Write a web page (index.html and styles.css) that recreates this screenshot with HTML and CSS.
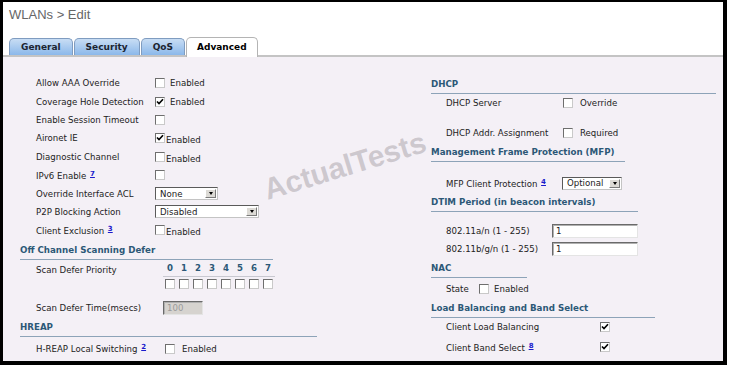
FILE: index.html
```html
<!DOCTYPE html>
<html lang="en">
<head>
  <meta charset="UTF-8" />
  <title>WLANs &gt; Edit</title>
  <link rel="stylesheet" href="styles.css">
</head>
<body>

<div class="frame">
  <div class="head">
    <div class="title">WLANs &gt; Edit</div>
    <ul class="tabs">
      <li class="tab">General</li>
      <li class="tab">Security</li>
      <li class="tab">QoS</li>
      <li class="tab on">Advanced</li>
    </ul>
  </div>

  <div class="panel">
    <!-- left column -->
    <div class="col col-left">
      <div class="grp grp-main">
        <div class="row"><span class="lbl">Allow AAA Override</span><span class="cb"></span><span class="opt">Enabled</span></div>
        <div class="row"><span class="lbl">Coverage Hole Detection</span><span class="cb"><svg width="8" height="8" viewBox="0 0 8 8"><path d="M1 3.5 3 5.6 7 1.2" fill="none" stroke="#000" stroke-width="1.6"/></svg></span><span class="opt">Enabled</span></div>
        <div class="row"><span class="lbl">Enable Session Timeout</span><span class="cb"></span></div>
        <div class="row"><span class="lbl">Aironet IE</span><span class="cb"><svg width="8" height="8" viewBox="0 0 8 8"><path d="M1 3.5 3 5.6 7 1.2" fill="none" stroke="#000" stroke-width="1.6"/></svg></span><span class="opt tight">Enabled</span></div>
        <div class="row"><span class="lbl">Diagnostic Channel</span><span class="cb"></span><span class="opt tight">Enabled</span></div>
        <div class="row"><span class="lbl">IPv6 Enable <a class="ref">7</a></span><span class="cb"></span></div>
        <div class="row"><span class="lbl">Override Interface ACL</span><span class="sel sel-none"><span class="val">None</span><span class="arr"></span></span></div>
        <div class="row"><span class="lbl">P2P Blocking Action</span><span class="sel sel-dis"><span class="val">Disabled</span><span class="arr"></span></span></div>
        <div class="row"><span class="lbl">Client Exclusion <a class="ref">3</a></span><span class="cb"></span><span class="opt tight">Enabled</span></div>
      </div>

      <h3 class="sec sec-ocs">Off Channel Scanning Defer</h3>
      <div class="grp grp-scan">
        <div class="row row-prio">
          <span class="lbl">Scan Defer Priority</span>
          <div class="prio">
            <div class="digits"><span>0</span><span>1</span><span>2</span><span>3</span><span>4</span><span>5</span><span>6</span><span>7</span></div>
            <div class="cbs"><span class="cb"></span><span class="cb"></span><span class="cb"></span><span class="cb"></span><span class="cb"></span><span class="cb"></span><span class="cb"></span><span class="cb"></span></div>
          </div>
        </div>
        <div class="row gap-m"><span class="lbl">Scan Defer Time(msecs)</span><span class="txt txt-dis">100</span></div>
      </div>

      <h3 class="sec sec-hreap">HREAP</h3>
      <div class="grp grp-hreap">
        <div class="row gap-xs"><span class="lbl">H-REAP Local Switching <a class="ref">2</a></span><span class="cb"></span><span class="opt wide">Enabled</span></div>
      </div>
    </div>

    <!-- right column -->
    <div class="col col-right">
      <h3 class="sec sec-dhcp">DHCP</h3>
      <div class="grp grp-dhcp">
        <div class="row"><span class="lbl">DHCP Server</span><span class="cb"></span><span class="opt wide">Override</span></div>
        <div class="row gap-l"><span class="lbl">DHCP Addr. Assignment</span><span class="cb"></span><span class="opt wide">Required</span></div>
      </div>

      <h3 class="sec sec-mfp">Management Frame Protection (MFP)</h3>
      <div class="grp grp-mfp">
        <div class="row gap-l"><span class="lbl">MFP Client Protection <a class="ref">4</a></span><span class="sel sel-opt"><span class="val">Optional</span><span class="arr"></span></span></div>
      </div>

      <h3 class="sec sec-dtim">DTIM Period (in beacon intervals)</h3>
      <div class="grp grp-dtim">
        <div class="row gap-m"><span class="lbl">802.11a/n (1 - 255)</span><span class="txt">1</span></div>
        <div class="row"><span class="lbl">802.11b/g/n (1 - 255)</span><span class="txt">1</span></div>
      </div>

      <h3 class="sec sec-nac">NAC</h3>
      <div class="grp grp-nac">
        <div class="row gap-s"><span class="lbl">State</span><span class="cb"></span><span class="opt">Enabled</span></div>
      </div>

      <h3 class="sec sec-lb">Load Balancing and Band Select</h3>
      <div class="grp grp-lb">
        <div class="row"><span class="lbl">Client Load Balancing</span><span class="cb"><svg width="8" height="8" viewBox="0 0 8 8"><path d="M1 3.5 3 5.6 7 1.2" fill="none" stroke="#000" stroke-width="1.6"/></svg></span></div>
        <div class="row gap-s"><span class="lbl">Client Band Select <a class="ref">8</a></span><span class="cb"><svg width="8" height="8" viewBox="0 0 8 8"><path d="M1 3.5 3 5.6 7 1.2" fill="none" stroke="#000" stroke-width="1.6"/></svg></span></div>
      </div>
    </div>

    <div class="wm">ActualTests</div>
  </div>
</div>

</body>
</html>
```

FILE: styles.css
```css
body {
  margin: 0;
  background: #fff;
  font-family: "DejaVu Sans", Verdana, sans-serif;
}
.frame {
  width: 727px;
  height: 365px;
  box-sizing: border-box;
  border: solid #000;
  border-width: 2px 4px 4px 3px;
  display: flex;
  flex-direction: column;
  overflow: hidden;
}
.head {
  padding-top: 5px;
  background: #fff;
}
.title {
  padding-left: 6px;
  font: 13px/16px "Liberation Sans", Arial, sans-serif;
  color: #666;
}
.tabs {
  display: flex;
  align-items: flex-end;
  gap: 1px;
  height: 18px;
  margin: 14px 0 0;
  padding: 0 0 0 6px;
  list-style: none;
  border-bottom: 2px solid #c4c4c4;
}
.tab {
  height: 17px;
  box-sizing: border-box;
  padding: 0 11px;
  border: 1px solid #7f9cc0;
  border-bottom: 0;
  border-radius: 5px 5px 0 0;
  background: linear-gradient(#c8ddf4, #8bb8ea);
  font-size: 9px;
  font-weight: bold;
  line-height: 16px;
  color: #1c2430;
}
.tab.on {
  height: 20px;
  margin-bottom: -2px;
  padding: 0 10px;
  background: #fff;
  border-color: #b4b4b4;
  line-height: 18px;
  color: #000;
}
.panel {
  flex: 1;
  position: relative;
  display: grid;
  grid-template-columns: 411px 1fr;
  align-items: start;
  padding: 17px 0 0 17px;
  background: #f4f0f6;
  font-size: 8.6px;
  color: #222;
}
.sec {
  margin: 4px 0 0;
  padding-bottom: 3px;
  border-bottom: 1px solid #8da3b8;
  font-size: 8.7px;
  font-weight: bold;
  line-height: 12px;
  color: #2c5877;
}
.sec-ocs { width: 253px; }
.sec-hreap { width: 297px; }
.sec-dhcp { width: 285px; }
.sec-mfp { width: 194px; }
.sec-dtim { width: 207px; }
.sec-nac { width: 96px; }
.sec-lb { width: 224px; }

.row {
  display: flex;
  align-items: center;
  height: 18px;
  padding-left: 16px;
}
.col-right .row { padding-left: 15px; }
.grp-main .row { height: 18.4px; }
.gap-xs { margin-top: 3px; }
.gap-s { margin-top: 2px; }
.gap-m { margin-top: 10px; }
.gap-l { margin-top: 12px; }

.lbl {
  flex: none;
  white-space: nowrap;
}
.grp-main .lbl { width: 119px; }
.grp-scan .lbl { width: 127px; }
.grp-hreap .lbl { width: 129px; }
.grp-dhcp .lbl { width: 117px; }
.grp-mfp .lbl { width: 116px; }
.grp-dtim .lbl { width: 106px; }
.grp-nac .lbl { width: 33px; }
.grp-lb .lbl { width: 154px; }

.ref {
  margin-left: 1px;
  font-size: 7px;
  font-weight: bold;
  color: #1a1acc;
  text-decoration: underline;
  vertical-align: 3px;
}
.cb {
  flex: none;
  display: inline-flex;
  width: 10px;
  height: 10px;
  box-sizing: border-box;
  border: 1px solid;
  border-color: #6e6e6e #c9c9c9 #c9c9c9 #6e6e6e;
  background: #fff;
}
.opt { margin-left: 5px; }
.opt.tight { margin-left: 1px; padding-top: 4px; }
.opt.wide { margin-left: 7px; }

.sel {
  display: inline-flex;
  align-items: center;
  height: 13px;
  box-sizing: border-box;
  padding-left: 4px;
  border: 1px solid;
  border-color: #5a5a5a #c4c4c4 #c4c4c4 #5a5a5a;
  background: #fff;
}
.sel .val { flex: 1; }
.sel .arr {
  display: flex;
  align-items: center;
  justify-content: center;
  width: 11px;
  height: 9px;
  margin-right: 1px;
  box-sizing: border-box;
  border: 1px solid;
  border-color: #fff #7a7a7a #7a7a7a #fff;
  background: #dcdad5;
}
.sel .arr::after {
  content: "";
  border-left: 2.5px solid transparent;
  border-right: 2.5px solid transparent;
  border-top: 3px solid #000;
}
.sel-none { width: 63px; }
.sel-dis { width: 104px; }
.sel-opt { width: 60px; }

.txt {
  width: 86px;
  height: 14px;
  box-sizing: border-box;
  padding-left: 3px;
  border: 1px solid;
  border-color: #6a6a6a #e4e4e4 #e4e4e4 #6a6a6a;
  box-shadow: inset 1px 1px 0 #b0b0b0;
  background: #fff;
  line-height: 12px;
}
.txt-dis {
  width: 40px;
  background: #d6d3cf;
  color: #9a9a9a;
}

.row-prio {
  height: auto;
  align-items: flex-start;
  margin-top: 1px;
}
.row-prio .lbl { line-height: 18px; }
.digits {
  display: flex;
  border-bottom: 1px solid #c8c8d0;
  font-weight: bold;
  line-height: 15px;
  color: #2c5877;
}
.digits span {
  width: 14px;
  text-align: center;
}
.cbs {
  display: flex;
  margin-top: 2px;
}
.cbs .cb { margin: 0 2px; }

.wm {
  position: absolute;
  left: 258px;
  top: 92px;
  font: bold 30px "Liberation Sans", Arial, sans-serif;
  color: rgba(140, 134, 140, 0.38);
  transform: rotate(-17deg);
  pointer-events: none;
}
```
